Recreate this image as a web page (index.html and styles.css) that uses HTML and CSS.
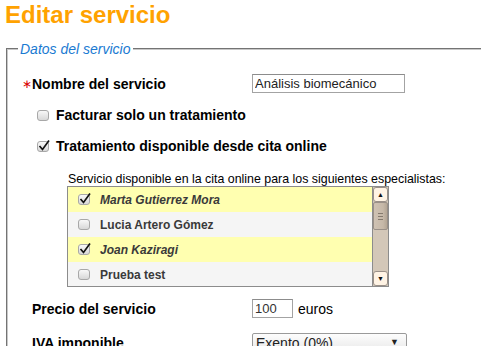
FILE: index.html
```html
<!DOCTYPE html>
<html lang="es">
<head>
    <meta charset="UTF-8">
    <meta name="viewport" content="width=device-width, initial-scale=1.0">
    <title>Editar servicio</title>
    <link rel="stylesheet" href="styles.css">
</head>
<body>
    <h1 class="page-title">Editar servicio</h1>

    <form class="service-form">
        <fieldset class="section">
            <legend>Datos del servicio</legend>

            <div class="field field-name">
                <span class="required">&lowast;</span>
                <label class="field-label" for="serviceName">Nombre del servicio</label>
                <input type="text" id="serviceName" class="text-input name-input" value="Análisis biomecánico">
            </div>

            <label class="option option-first">
                <span class="check"></span>
                Facturar solo un tratamiento
            </label>

            <label class="option option-second">
                <span class="check">
                    <svg viewBox="0 0 14 14" width="14" height="14"><path d="M2.5 8 L5.5 11.5 L12 2.5" /></svg>
                </span>
                Tratamiento disponible desde cita online
            </label>

            <div class="specialists">
                <p class="specialists-caption">Servicio disponible en la cita online para los siguientes especialistas:</p>
                <div class="specialists-list">
                    <ul class="specialists-items">
                        <li class="specialist selected">
                            <span class="check"><svg viewBox="0 0 14 14" width="14" height="14"><path d="M2.5 8 L5.5 11.5 L12 2.5" /></svg></span>
                            Marta Gutierrez Mora
                        </li>
                        <li class="specialist">
                            <span class="check"></span>
                            Lucia Artero Gómez
                        </li>
                        <li class="specialist selected">
                            <span class="check"><svg viewBox="0 0 14 14" width="14" height="14"><path d="M2.5 8 L5.5 11.5 L12 2.5" /></svg></span>
                            Joan Kaziragi
                        </li>
                        <li class="specialist">
                            <span class="check"></span>
                            Prueba test
                        </li>
                    </ul>
                    <div class="scrollbar">
                        <span class="scroll-btn">&#9650;</span>
                        <span class="scroll-thumb"><span class="grip"></span></span>
                        <span class="scroll-track"></span>
                        <span class="scroll-btn">&#9660;</span>
                    </div>
                </div>
            </div>

            <div class="field field-price">
                <span class="required"></span>
                <label class="field-label" for="price">Precio del servicio</label>
                <input type="text" id="price" class="text-input price-input" value="100">
                <span class="unit">euros</span>
            </div>

            <div class="field field-tax">
                <span class="required"></span>
                <label class="field-label" for="tax">IVA imponible</label>
                <span class="select-wrap">
                    <select id="tax" class="select-input">
                        <option>Exento (0%)</option>
                    </select>
                </span>
            </div>
        </fieldset>
    </form>
</body>
</html>
```

FILE: styles.css
```css
html {
    overflow: hidden;
}

body {
    margin: 0;
    font-family: "Liberation Sans", Arial, sans-serif;
    color: #000;
    background: #fff;
}

.page-title {
    margin: 0 0 12px 5px;
    padding-top: 1px;
    font-size: 24px;
    line-height: 28px;
    color: #ffa200;
}

.service-form {
    margin: 0;
}

.section {
    margin: 0 -200px 0 6px;
    padding: 0 0 20px 10px;
    border: 2px groove #c8c8c8;
    min-width: 0;
}

.section legend {
    padding: 0 2px;
    font-size: 14px;
    font-style: italic;
    line-height: 16px;
    color: #1a7ad2;
}

.field {
    display: flex;
    align-items: center;
    height: 19px;
    margin-left: 4px;
    font-size: 14px;
}

.field-name {
    margin-top: 17px;
}

.field-price {
    margin-top: 12px;
}

.field-tax {
    margin-top: 15px;
    height: 20px;
}

.required {
    width: 10px;
    font-size: 12px;
    font-weight: normal;
    color: #d80000;
}

.field-label {
    width: 220px;
    font-weight: bold;
}

.text-input {
    box-sizing: border-box;
    height: 19px;
    margin: 0;
    padding: 0 2px;
    border: 1px solid #a3a3a3;
    border-top-color: #8c8c8c;
    font-family: inherit;
    font-size: 13px;
    color: #222;
    background: #fff;
}

.name-input {
    width: 153px;
}

.price-input {
    width: 41px;
    color: #333;
}

.unit {
    margin-left: 5px;
}

.select-wrap {
    position: relative;
    display: block;
}

.select-input {
    box-sizing: border-box;
    width: 155px;
    height: 20px;
    margin: 0;
    padding: 0 3px;
    border: 1px solid #9a9a9a;
    border-radius: 2px;
    font-family: inherit;
    font-size: 14px;
    color: #222;
    background: linear-gradient(#fdfdfd, #e8e8e8);
    appearance: none;
}

.select-wrap::after {
    content: "\25BC";
    position: absolute;
    right: 8px;
    top: 4px;
    font-size: 9px;
    color: #222;
}

.option {
    display: flex;
    align-items: center;
    height: 20px;
    margin-left: 19px;
    font-size: 14px;
    font-weight: bold;
}

.option-first {
    margin-top: 12px;
}

.option-second {
    margin-top: 11px;
}

.check {
    position: relative;
    box-sizing: border-box;
    flex: none;
    width: 12px;
    height: 11px;
    margin-right: 7px;
    border: 1px solid #a8a8a8;
    border-radius: 3px;
    background: linear-gradient(#f8f8f8, #d8d8d8);
}

.check svg {
    position: absolute;
    left: -1px;
    top: -4px;
    fill: none;
    stroke: #111;
    stroke-width: 1.7;
}

.specialists {
    margin: 16px 0 0 49px;
}

.specialists-caption {
    margin: 0;
    padding-left: 1px;
    font-size: 12.4px;
    line-height: 14px;
}

.specialists-list {
    display: flex;
    box-sizing: border-box;
    width: 322px;
    height: 101px;
    border: 1px solid #8c8c8c;
    overflow: hidden;
}

.specialists-items {
    flex: 1;
    margin: 0;
    padding: 0;
    list-style: none;
}

.specialist {
    display: flex;
    align-items: center;
    height: 25px;
    padding-left: 10px;
    font-size: 12px;
    font-weight: bold;
    color: #3a3a3a;
    background: #f5f5f5;
}

.specialist .check {
    margin-right: 10px;
}

.specialist.selected {
    font-style: italic;
    background: #ffffb0;
}

.scrollbar {
    display: flex;
    flex-direction: column;
    width: 15px;
    border-left: 1px solid #8c8c8c;
    background: #d3c7b8;
}

.scroll-btn {
    box-sizing: border-box;
    height: 15px;
    margin: 0;
    border: 1px solid #9a9088;
    border-radius: 3px;
    background: #fff3e4;
    font-size: 7px;
    line-height: 13px;
    text-align: center;
    color: #111;
}

.scroll-thumb {
    display: flex;
    align-items: center;
    justify-content: center;
    box-sizing: border-box;
    height: 28px;
    border: 1px solid #9a9088;
    border-radius: 2px;
    background: linear-gradient(90deg, #cfc2b3, #c6b8a8 70%, #b3a594);
}

.grip {
    width: 5px;
    height: 5px;
    border-top: 1px solid #857a6e;
    border-bottom: 1px solid #857a6e;
    background: linear-gradient(#857a6e, #857a6e) center / 100% 1px no-repeat;
}

.scroll-track {
    flex: 1;
}
```
